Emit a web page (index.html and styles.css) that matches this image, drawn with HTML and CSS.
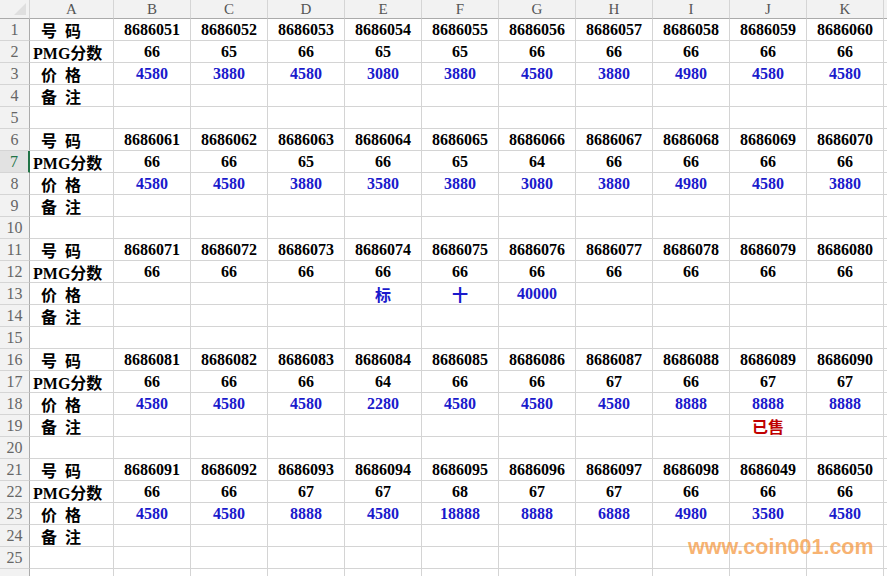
FILE: index.html
```html
<!DOCTYPE html>
<html lang="zh">
<head>
<meta charset="utf-8">
<title>Sheet</title>
<link rel="stylesheet" href="styles.css">
</head>
<body>
<div class="sheet">
  <div class="grid">
    <div class="corner"><span class="tri"></span></div>
    <div class="ch">A</div><div class="ch">B</div><div class="ch">C</div><div class="ch">D</div><div class="ch">E</div><div class="ch">F</div><div class="ch">G</div><div class="ch">H</div><div class="ch">I</div><div class="ch">J</div><div class="ch">K</div><div class="ch"></div>

    <div class="rh">1</div><div class="c lab">  号  码</div><div class="c">8686051</div><div class="c">8686052</div><div class="c">8686053</div><div class="c">8686054</div><div class="c">8686055</div><div class="c">8686056</div><div class="c">8686057</div><div class="c">8686058</div><div class="c">8686059</div><div class="c">8686060</div><div class="c"></div>
    <div class="rh">2</div><div class="c lab">PMG分数</div><div class="c">66</div><div class="c">65</div><div class="c">66</div><div class="c">65</div><div class="c">65</div><div class="c">66</div><div class="c">66</div><div class="c">66</div><div class="c">66</div><div class="c">66</div><div class="c"></div>
    <div class="rh">3</div><div class="c lab">  价  格</div><div class="c p">4580</div><div class="c p">3880</div><div class="c p">4580</div><div class="c p">3080</div><div class="c p">3880</div><div class="c p">4580</div><div class="c p">3880</div><div class="c p">4980</div><div class="c p">4580</div><div class="c p">4580</div><div class="c"></div>
    <div class="rh">4</div><div class="c lab">  备  注</div><div class="c"></div><div class="c"></div><div class="c"></div><div class="c"></div><div class="c"></div><div class="c"></div><div class="c"></div><div class="c"></div><div class="c"></div><div class="c"></div><div class="c"></div>
    <div class="rh">5</div><div class="c"></div><div class="c"></div><div class="c"></div><div class="c"></div><div class="c"></div><div class="c"></div><div class="c"></div><div class="c"></div><div class="c"></div><div class="c"></div><div class="c"></div><div class="c"></div>

    <div class="rh">6</div><div class="c lab">  号  码</div><div class="c">8686061</div><div class="c">8686062</div><div class="c">8686063</div><div class="c">8686064</div><div class="c">8686065</div><div class="c">8686066</div><div class="c">8686067</div><div class="c">8686068</div><div class="c">8686069</div><div class="c">8686070</div><div class="c"></div>
    <div class="rh sel">7</div><div class="c lab">PMG分数</div><div class="c">66</div><div class="c">66</div><div class="c">65</div><div class="c">66</div><div class="c">65</div><div class="c">64</div><div class="c">66</div><div class="c">66</div><div class="c">66</div><div class="c">66</div><div class="c"></div>
    <div class="rh">8</div><div class="c lab">  价  格</div><div class="c p">4580</div><div class="c p">4580</div><div class="c p">3880</div><div class="c p">3580</div><div class="c p">3880</div><div class="c p">3080</div><div class="c p">3880</div><div class="c p">4980</div><div class="c p">4580</div><div class="c p">3880</div><div class="c"></div>
    <div class="rh">9</div><div class="c lab">  备  注</div><div class="c"></div><div class="c"></div><div class="c"></div><div class="c"></div><div class="c"></div><div class="c"></div><div class="c"></div><div class="c"></div><div class="c"></div><div class="c"></div><div class="c"></div>
    <div class="rh">10</div><div class="c"></div><div class="c"></div><div class="c"></div><div class="c"></div><div class="c"></div><div class="c"></div><div class="c"></div><div class="c"></div><div class="c"></div><div class="c"></div><div class="c"></div><div class="c"></div>

    <div class="rh">11</div><div class="c lab">  号  码</div><div class="c">8686071</div><div class="c">8686072</div><div class="c">8686073</div><div class="c">8686074</div><div class="c">8686075</div><div class="c">8686076</div><div class="c">8686077</div><div class="c">8686078</div><div class="c">8686079</div><div class="c">8686080</div><div class="c"></div>
    <div class="rh">12</div><div class="c lab">PMG分数</div><div class="c">66</div><div class="c">66</div><div class="c">66</div><div class="c">66</div><div class="c">66</div><div class="c">66</div><div class="c">66</div><div class="c">66</div><div class="c">66</div><div class="c">66</div><div class="c"></div>
    <div class="rh">13</div><div class="c lab">  价  格</div><div class="c"></div><div class="c"></div><div class="c"></div><div class="c p cjk">标</div><div class="c p cjk">十</div><div class="c p">40000</div><div class="c"></div><div class="c"></div><div class="c"></div><div class="c"></div><div class="c"></div>
    <div class="rh">14</div><div class="c lab">  备  注</div><div class="c"></div><div class="c"></div><div class="c"></div><div class="c"></div><div class="c"></div><div class="c"></div><div class="c"></div><div class="c"></div><div class="c"></div><div class="c"></div><div class="c"></div>
    <div class="rh">15</div><div class="c"></div><div class="c"></div><div class="c"></div><div class="c"></div><div class="c"></div><div class="c"></div><div class="c"></div><div class="c"></div><div class="c"></div><div class="c"></div><div class="c"></div><div class="c"></div>

    <div class="rh">16</div><div class="c lab">  号  码</div><div class="c">8686081</div><div class="c">8686082</div><div class="c">8686083</div><div class="c">8686084</div><div class="c">8686085</div><div class="c">8686086</div><div class="c">8686087</div><div class="c">8686088</div><div class="c">8686089</div><div class="c">8686090</div><div class="c"></div>
    <div class="rh">17</div><div class="c lab">PMG分数</div><div class="c">66</div><div class="c">66</div><div class="c">66</div><div class="c">64</div><div class="c">66</div><div class="c">66</div><div class="c">67</div><div class="c">66</div><div class="c">67</div><div class="c">67</div><div class="c"></div>
    <div class="rh">18</div><div class="c lab">  价  格</div><div class="c p">4580</div><div class="c p">4580</div><div class="c p">4580</div><div class="c p">2280</div><div class="c p">4580</div><div class="c p">4580</div><div class="c p">4580</div><div class="c p">8888</div><div class="c p">8888</div><div class="c p">8888</div><div class="c"></div>
    <div class="rh">19</div><div class="c lab">  备  注</div><div class="c"></div><div class="c"></div><div class="c"></div><div class="c"></div><div class="c"></div><div class="c"></div><div class="c"></div><div class="c"></div><div class="c sold">已售</div><div class="c"></div><div class="c"></div>
    <div class="rh">20</div><div class="c"></div><div class="c"></div><div class="c"></div><div class="c"></div><div class="c"></div><div class="c"></div><div class="c"></div><div class="c"></div><div class="c"></div><div class="c"></div><div class="c"></div><div class="c"></div>

    <div class="rh">21</div><div class="c lab">  号  码</div><div class="c">8686091</div><div class="c">8686092</div><div class="c">8686093</div><div class="c">8686094</div><div class="c">8686095</div><div class="c">8686096</div><div class="c">8686097</div><div class="c">8686098</div><div class="c">8686049</div><div class="c">8686050</div><div class="c"></div>
    <div class="rh">22</div><div class="c lab">PMG分数</div><div class="c">66</div><div class="c">66</div><div class="c">67</div><div class="c">67</div><div class="c">68</div><div class="c">67</div><div class="c">67</div><div class="c">66</div><div class="c">66</div><div class="c">66</div><div class="c"></div>
    <div class="rh">23</div><div class="c lab">  价  格</div><div class="c p">4580</div><div class="c p">4580</div><div class="c p">8888</div><div class="c p">4580</div><div class="c p">18888</div><div class="c p">8888</div><div class="c p">6888</div><div class="c p">4980</div><div class="c p">3580</div><div class="c p">4580</div><div class="c"></div>
    <div class="rh">24</div><div class="c lab">  备  注</div><div class="c"></div><div class="c"></div><div class="c"></div><div class="c"></div><div class="c"></div><div class="c"></div><div class="c"></div><div class="c"></div><div class="c"></div><div class="c"></div><div class="c"></div>
    <div class="rh">25</div><div class="c"></div><div class="c"></div><div class="c"></div><div class="c"></div><div class="c"></div><div class="c"></div><div class="c"></div><div class="c"></div><div class="c"></div><div class="c"></div><div class="c"></div><div class="c"></div>
    <div class="rh"></div><div class="c"></div><div class="c"></div><div class="c"></div><div class="c"></div><div class="c"></div><div class="c"></div><div class="c"></div><div class="c"></div><div class="c"></div><div class="c"></div><div class="c"></div><div class="c"></div>
  </div>
  <div class="watermark">www.coin001.com</div>
</div>
</body>
</html>
```

FILE: styles.css
```css
html, body {
  margin: 0;
  padding: 0;
  background: #ffffff;
  overflow: hidden;
}

.sheet {
  position: relative;
  width: 887px;
  height: 576px;
  overflow: hidden;
}

.grid {
  display: grid;
  grid-template-columns: 30px 84px repeat(10, 77px) 30px;
  grid-template-rows: 19px;
  grid-auto-rows: 22px;
}

.corner,
.ch,
.rh,
.c {
  box-sizing: border-box;
  display: flex;
  align-items: center;
  justify-content: center;
  white-space: pre;
  overflow: hidden;
}

.corner {
  background: #f2f2f2;
  border-right: 1px solid #d5d5d5;
  border-bottom: 1px solid #ababab;
  position: relative;
}

.tri {
  position: absolute;
  right: 3px;
  bottom: 3px;
  width: 0;
  height: 0;
  border-left: 12px solid transparent;
  border-bottom: 12px solid #dfdfdf;
}

.ch {
  background: #f2f2f2;
  border-right: 1px solid #d5d5d5;
  border-bottom: 1px solid #ababab;
  font-family: "Liberation Serif", serif;
  font-size: 15px;
  color: #555555;
  padding-top: 1px;
}

.rh {
  background: #f2f2f2;
  border-right: 1px solid #ababab;
  border-bottom: 1px solid #d5d5d5;
  font-family: "Liberation Serif", serif;
  font-size: 16px;
  color: #666666;
  padding-top: 1px;
}

.rh.sel {
  background: #e2e2e2;
  color: #217346;
  border-right: 2px solid #217346;
}

.c {
  border-right: 1px solid #d4d4d4;
  border-bottom: 1px solid #d4d4d4;
  font-family: "Liberation Serif", serif;
  font-weight: bold;
  font-size: 16px;
  color: #000000;
  padding-top: 1px;
}

.c.lab {
  justify-content: flex-start;
  padding-left: 3px;
  font-family: "Liberation Serif", "Noto Sans CJK SC", serif;
  font-weight: bold;
}

.c.p {
  color: #1a1acc;
}

.c.cjk {
  font-family: "Noto Sans CJK SC", sans-serif;
}

.c.sold {
  color: #c00000;
  font-family: "Noto Sans CJK SC", sans-serif;
}

.watermark {
  position: absolute;
  left: 688px;
  top: 535px;
  font-family: "Liberation Sans", Arial, sans-serif;
  font-weight: bold;
  font-size: 21.5px;
  line-height: 24px;
  color: rgba(245, 150, 60, 0.72);
}
```
